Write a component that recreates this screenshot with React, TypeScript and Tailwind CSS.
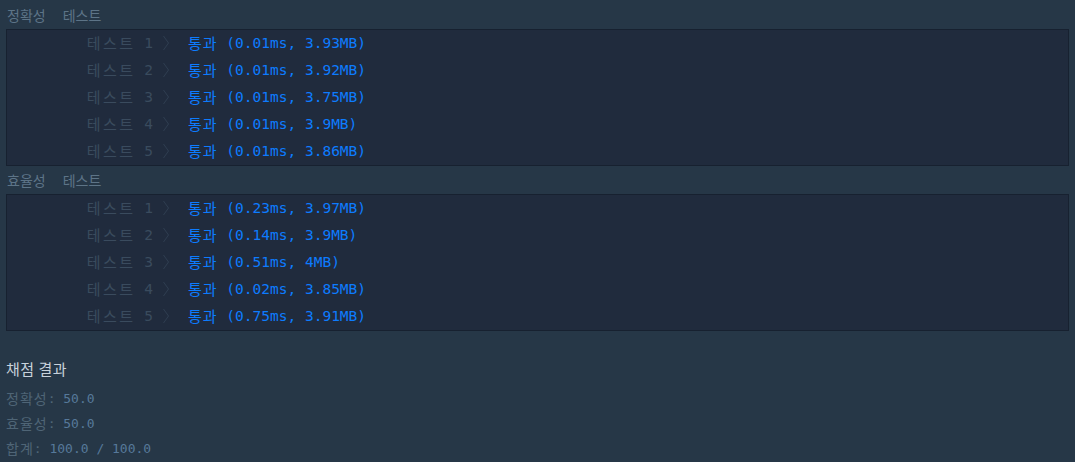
import React from "react";

type TestResult = { time: string; mem: string };

const accuracy: TestResult[] = [
  { time: "0.01ms", mem: "3.93MB" },
  { time: "0.01ms", mem: "3.92MB" },
  { time: "0.01ms", mem: "3.75MB" },
  { time: "0.01ms", mem: "3.9MB" },
  { time: "0.01ms", mem: "3.86MB" },
];

const efficiency: TestResult[] = [
  { time: "0.23ms", mem: "3.97MB" },
  { time: "0.14ms", mem: "3.9MB" },
  { time: "0.51ms", mem: "4MB" },
  { time: "0.02ms", mem: "3.85MB" },
  { time: "0.75ms", mem: "3.91MB" },
];

const mono = {
  fontFamily: '"DejaVu Sans Mono", "Noto Sans CJK KR", monospace',
};

// hangul in the original is set wider than the mono digits
function Ko({ children, className = "" }: { children: React.ReactNode; className?: string }) {
  return (
    <span
      className={className}
      style={{ fontFamily: '"Noto Sans CJK KR", sans-serif' }}
    >
      {children}
    </span>
  );
}

function Chevron() {
  return (
    <svg width="8" height="16" viewBox="0 0 8 16" className="shrink-0 -mt-[2px]">
      <polyline
        points="1.5,1 6.5,8 1.5,15"
        fill="none"
        stroke="#2f3e51"
        strokeWidth="1"
      />
    </svg>
  );
}

function TestGroup({ title, results }: { title: string; results: TestResult[] }) {
  return (
    <div>
      {/* group title */}
      <div className="h-[28px] px-[7px] flex items-center gap-[17px] text-[#5d7487]">
        <Ko className="text-[14px]">{title}</Ko>
        <Ko className="text-[14px]">테스트</Ko>
      </div>
      <div className="mx-[6px] bg-[#202b3d] border border-[#172130]">
        {results.map((r, i) => (
          <div key={i} className="h-[27px] flex items-center text-[14.5px]">
            <div className="w-[146px] flex justify-end items-center text-[#3a4b5e] whitespace-pre">
              <Ko className="text-[15px] tracking-[2.5px]">테스트</Ko>
              <span> {i + 1}</span>
            </div>
            <div className="ml-[9px] mr-[18px] flex items-center">
              <Chevron />
            </div>
            <div className="flex items-center text-[#0d7cff] whitespace-pre">
              <Ko className="text-[15px] tracking-[1px]">통과</Ko>
              <span> ({r.time}, {r.mem})</span>
            </div>
          </div>
        ))}
      </div>
    </div>
  );
}

function ScoreLine({ label, value }: { label: string; value: string }) {
  return (
    <div className="h-[25px] flex items-center text-[13px] whitespace-pre">
      <Ko className="text-[14px] tracking-[1px] text-[#4f6576]">{label}</Ko>
      <span className="text-[#4f6576]">: </span>
      <span className="text-[#56799a]">{value}</span>
    </div>
  );
}

export default function App() {
  return (
    <div
      className="w-[1075px] h-[462px] bg-[#263747] pt-px overflow-hidden"
      style={mono}
    >
      <TestGroup title="정확성" results={accuracy} />
      <TestGroup title="효율성" results={efficiency} />

      {/* grading summary */}
      <div className="px-[6px] pt-[21px]">
        <div className="h-[34px] flex items-center text-[#c8d2dc]">
          <Ko className="text-[15px] tracking-[0.5px]">채점 결과</Ko>
        </div>
        <ScoreLine label="정확성" value="50.0" />
        <ScoreLine label="효율성" value="50.0" />
        <ScoreLine label="합계" value="100.0 / 100.0" />
      </div>
    </div>
  );
}
